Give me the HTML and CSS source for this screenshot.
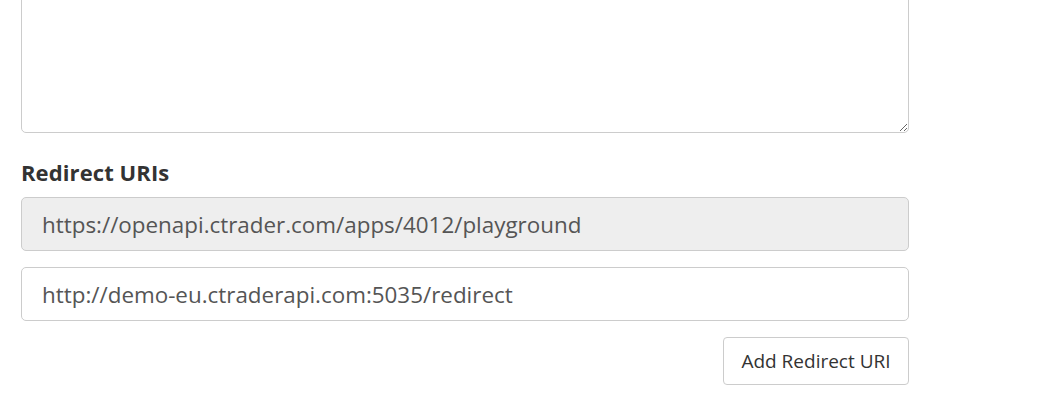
FILE: index.html
```html
<!DOCTYPE html>
<html>
<head>
<meta charset="utf-8">
<link rel="stylesheet" href="styles.css">
</head>
<body>
<div class="form">
  <textarea class="area"></textarea>
  <label class="label">Redirect URIs</label>
  <div class="uris">
    <input class="field field-disabled" type="text" value="https://openapi.ctrader.com/apps/4012/playground" disabled>
    <input class="field" type="text" value="http://demo-eu.ctraderapi.com:5035/redirect">
  </div>
  <div class="actions">
    <button class="btn" type="button">Add Redirect URI</button>
  </div>
</div>
</body>
</html>
```

FILE: styles.css
```css
html, body {
  margin: 0;
  padding: 0;
  background: #fff;
  overflow: hidden;
}
body {
  font-family: "Open Sans", "Liberation Sans", sans-serif;
  color: #333;
}
.form {
  width: 888px;
  margin-left: 21px;
  display: flex;
  flex-direction: column;
}
.area {
  box-sizing: border-box;
  display: block;
  width: 100%;
  height: 143px;
  margin-top: -10px;
  border: 1px solid #ccc;
  border-radius: 5px;
  background: #fff;
  resize: vertical;
  font: inherit;
}
.label {
  display: block;
  margin-top: 25px;
  font-size: 22px;
  font-weight: 700;
  line-height: 28px;
  letter-spacing: 0.1px;
  color: #333;
}
.uris {
  margin-top: 11px;
  display: flex;
  flex-direction: column;
  gap: 16px;
}
.field {
  box-sizing: border-box;
  width: 100%;
  height: 54px;
  padding: 0 20px;
  border: 1px solid #ccc;
  border-radius: 5px;
  background: #fff;
  font-family: "Open Sans", "Liberation Sans", sans-serif;
  font-size: 22.4px;
  color: #555;
  outline: none;
}
.field-disabled {
  background: #eee;
  color: #555;
  -webkit-text-fill-color: #555;
  opacity: 1;
}
.actions {
  margin-top: 16px;
  display: flex;
  justify-content: flex-end;
}
.btn {
  box-sizing: border-box;
  width: 186px;
  height: 48px;
  border: 1px solid #ccc;
  border-radius: 4px;
  background: #fff;
  font-family: "Open Sans", "Liberation Sans", sans-serif;
  font-size: 19px;
  color: #333;
  padding: 0;
}
```
